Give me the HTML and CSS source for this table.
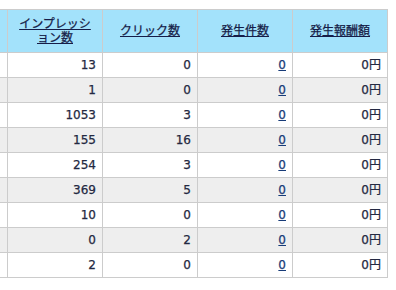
FILE: index.html
```html
<!DOCTYPE html>
<html lang="ja">
<head>
<meta charset="utf-8">
<link rel="stylesheet" href="styles.css">
</head>
<body>
<div class="wrap">
<table class="report">
<colgroup>
<col class="c-first"><col class="c"><col class="c"><col class="c"><col class="c">
</colgroup>
<thead>
<tr>
<th>&nbsp;</th>
<th><a href="#">インプレッション数</a></th>
<th><a href="#">クリック数</a></th>
<th><a href="#">発生件数</a></th>
<th><a href="#">発生報酬額</a></th>
</tr>
</thead>
<tbody>
<tr><td></td><td>13</td><td>0</td><td><a href="#">0</a></td><td>0円</td></tr>
<tr class="alt"><td></td><td>1</td><td>0</td><td><a href="#">0</a></td><td>0円</td></tr>
<tr><td></td><td>1053</td><td>3</td><td><a href="#">0</a></td><td>0円</td></tr>
<tr class="alt"><td></td><td>155</td><td>16</td><td><a href="#">0</a></td><td>0円</td></tr>
<tr><td></td><td>254</td><td>3</td><td><a href="#">0</a></td><td>0円</td></tr>
<tr class="alt"><td></td><td>369</td><td>5</td><td><a href="#">0</a></td><td>0円</td></tr>
<tr><td></td><td>10</td><td>0</td><td><a href="#">0</a></td><td>0円</td></tr>
<tr class="alt"><td></td><td>0</td><td>2</td><td><a href="#">0</a></td><td>0円</td></tr>
<tr><td></td><td>2</td><td>0</td><td><a href="#">0</a></td><td>0円</td></tr>
</tbody>
</table>
</div>
</body>
</html>
```
FILE: styles.css
```css
html, body {
  margin: 0;
  padding: 0;
  background: #fff;
}
body {
  font-family: "DejaVu Sans", "Noto Sans CJK JP", sans-serif;
  font-size: 12px;
  color: #232841;
  overflow: hidden;
  -webkit-text-stroke: 0.25px currentColor;
}
.wrap {
  padding-top: 9px;
  width: 396px;
  overflow: hidden;
}
.report {
  border-collapse: collapse;
  table-layout: fixed;
  width: 480px;
  margin-left: -93px;
}
.c-first { width: 100px; }
.c { width: 95px; }
.report th,
.report td {
  border: 1px solid #cccccc;
  padding: 0 6px;
}
.report th {
  background: #a3e2fb;
  height: 42px;
  line-height: 14px;
  font-weight: normal;
  text-align: center;
  vertical-align: middle;
  padding: 0 10px;
}
.report th a {
  color: #161d48;
  text-decoration: underline;
}
.report td {
  height: 24px;
  text-align: right;
  vertical-align: middle;
  line-height: 15px;
}
.report tr.alt td {
  background: #eeeeee;
}
.report td a {
  color: #173b78;
  text-decoration: underline;
}
```
